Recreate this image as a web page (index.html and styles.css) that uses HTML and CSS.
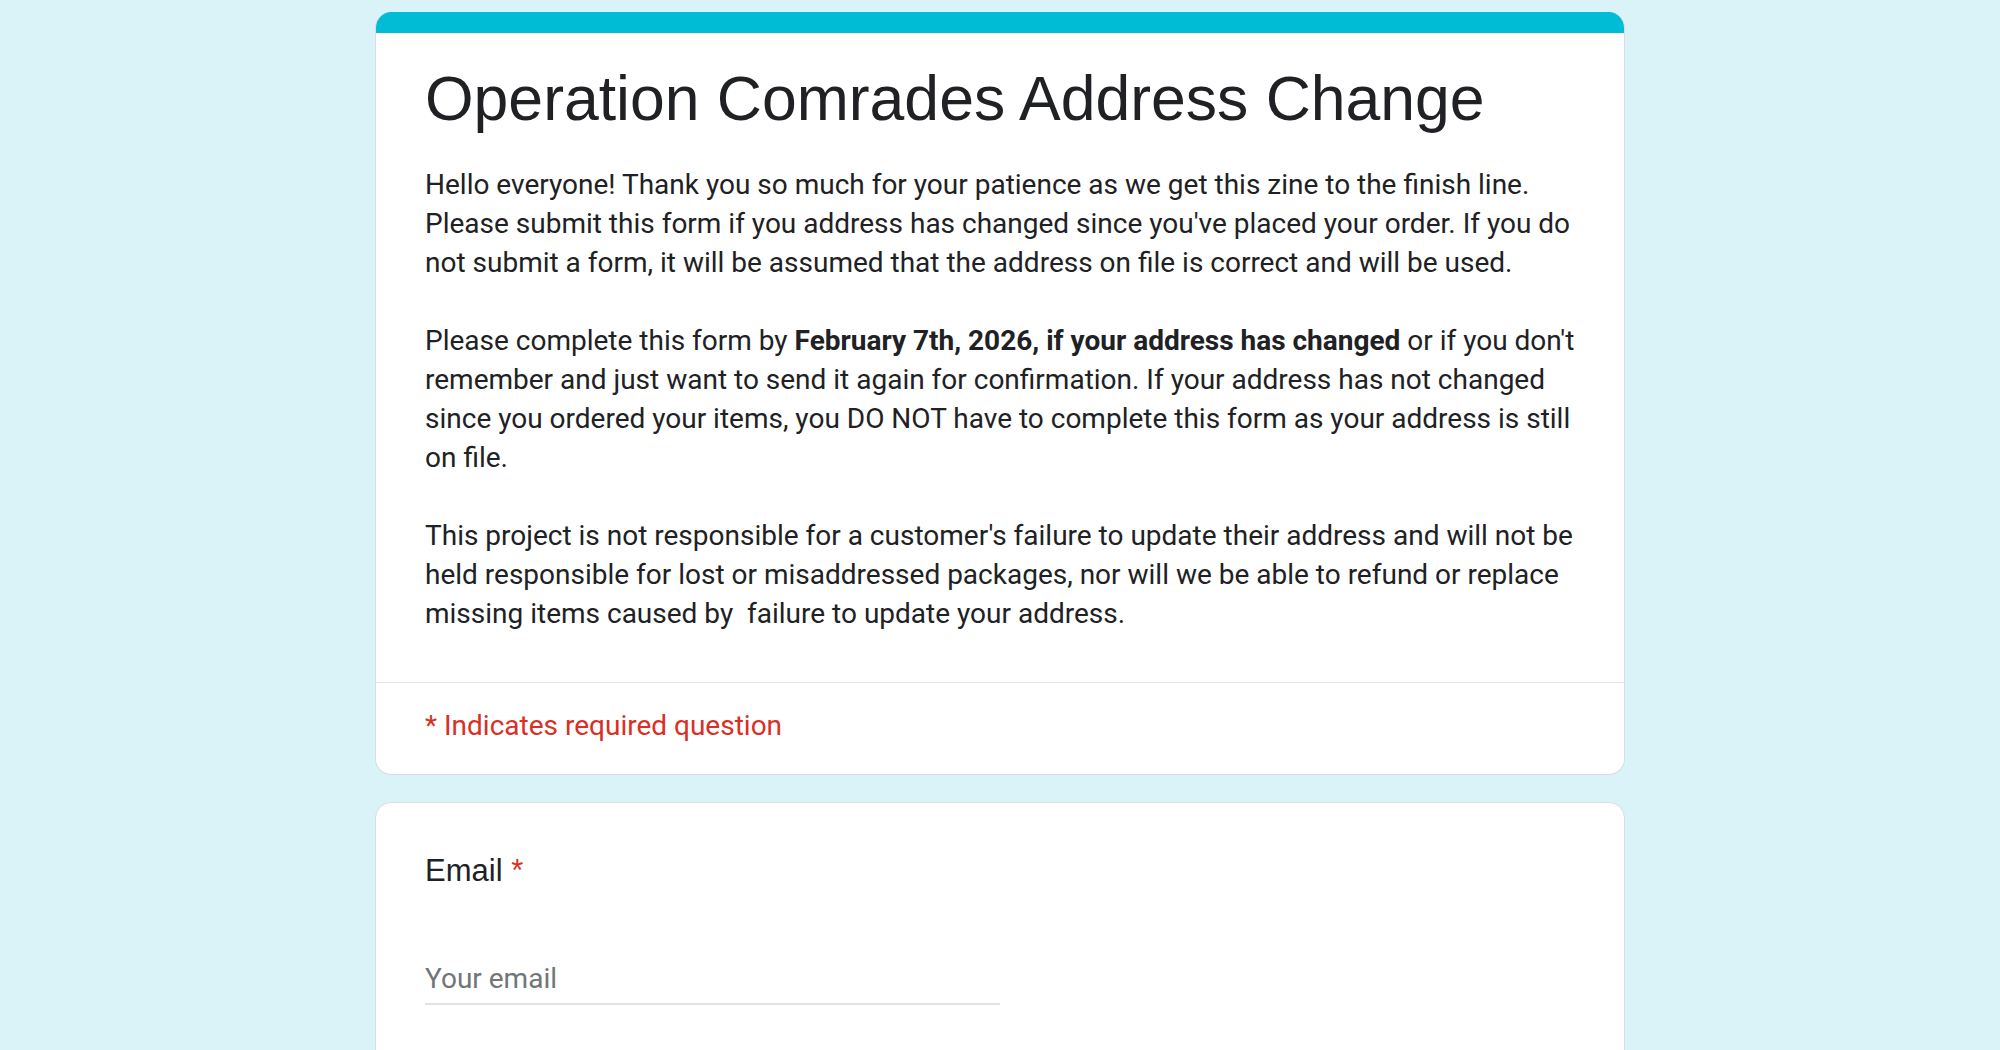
FILE: index.html
```html
<!DOCTYPE html>
<html lang="en">
<head>
<meta charset="utf-8">
<title>Operation Comrades Address Change</title>
<link rel="stylesheet" href="styles.css">
</head>
<body>
<div class="container">
  <div class="card header-card">
    <div class="topbar"></div>
    <div class="header-main">
      <h1 class="title">Operation Comrades Address Change</h1>
      <div class="desc">
        <p>Hello everyone! Thank you so much for your patience as we get this zine to the finish line. Please submit this form if you address has changed since you've placed your order. If you do not submit a form, it will be assumed that the address on file is correct and will be used.</p>
        <p>Please complete this form by <b>February 7th, 2026, if your address has changed</b> or if you don't remember and just want to send it again for confirmation. If your address has not changed since you ordered your items, you DO NOT have to complete this form as your address is still on file.</p>
        <p>This project is not responsible for a customer's failure to update their address and will not be held responsible for lost or misaddressed packages, nor will we be able to refund or replace missing items caused by &nbsp;failure to update your address.</p>
      </div>
    </div>
    <div class="required-note">* Indicates required question</div>
  </div>
  <div class="card question-card">
    <div class="q-title">Email <span class="star">*</span></div>
    <div class="input-wrap">
      <div class="input">Your email</div>
    </div>
  </div>
</div>
</body>
</html>
```
FILE: styles.css
```css
html, body {
  margin: 0;
  padding: 0;
}
body {
  background: #d9f3f8;
  font-family: Roboto, "Liberation Sans", Arial, sans-serif;
  color: #202124;
}
.container {
  width: 1250px;
  margin: 12px auto 0;
  display: flex;
  flex-direction: column;
  gap: 27px;
}
.card {
  background: #fff;
  border: 1px solid #dadce0;
  border-radius: 16px;
  overflow: hidden;
  box-sizing: border-box;
}
.header-card {
  border-top: none;
}
.topbar {
  height: 21px;
  background: #00bcd4;
}
.header-main {
  padding: 28px 49px 49px;
  border-bottom: 1px solid #e3e5e8;
}
.title {
  margin: 0;
  font-family: "Liberation Sans", Arial, sans-serif;
  font-weight: 400;
  font-size: 62.5px;
  line-height: 74px;
  color: #202124;
}
.desc {
  margin-top: 30px;
  font-size: 28px;
  line-height: 39px;
  color: #202124;
}
.desc p {
  margin: 0 0 39px;
}
.desc p:last-child {
  margin-bottom: 0;
}
.desc b {
  font-weight: 700;
}
.required-note {
  padding: 23px 49px 29px;
  font-size: 28px;
  line-height: 39px;
  color: #d93025;
}
.question-card {
  padding: 48px 49px 60px;
  min-height: 300px;
}
.q-title {
  font-family: "Liberation Sans", Arial, sans-serif;
  font-size: 31px;
  line-height: 40px;
  color: #202124;
}
.star {
  color: #d93025;
}
.input-wrap {
  margin-top: 68px;
  width: 50%;
}
.input {
  font-size: 28px;
  line-height: 39px;
  color: #70757a;
  padding-bottom: 5px;
  border-bottom: 2px solid #e0e2e5;
}
```
